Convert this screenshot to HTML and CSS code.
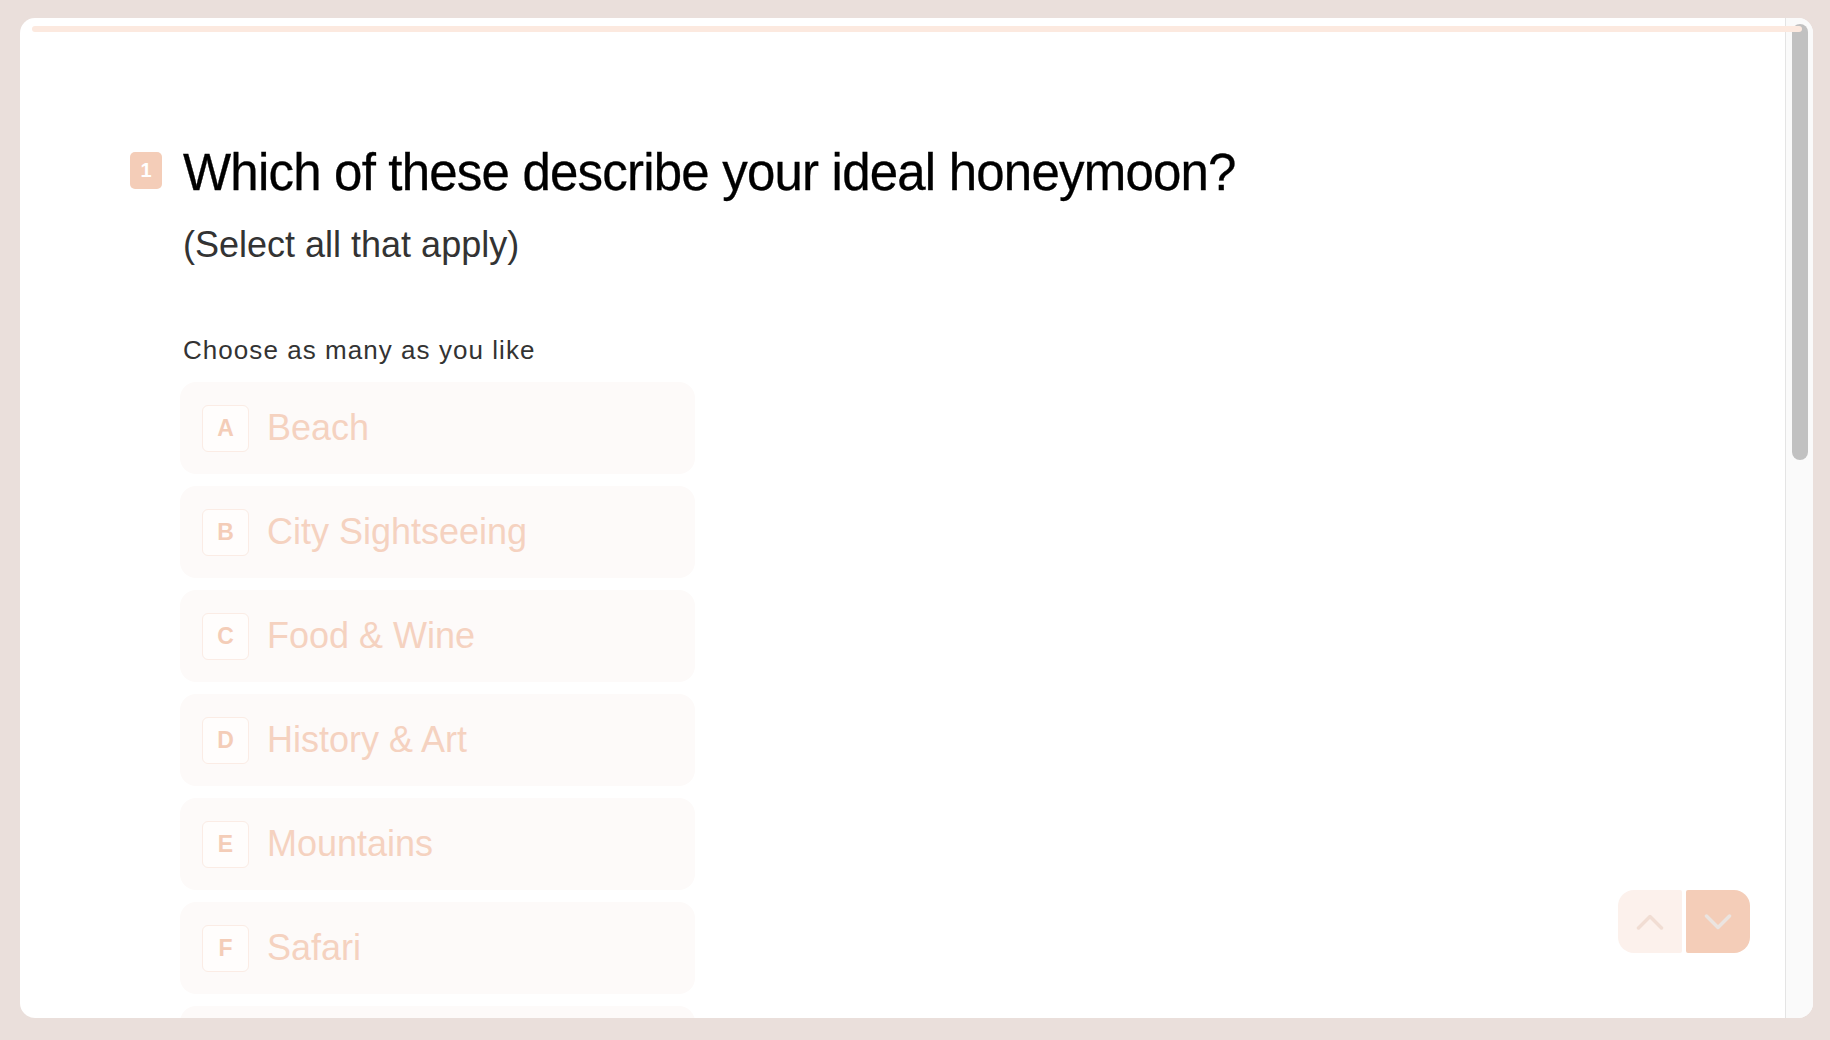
FILE: index.html
```html
<!DOCTYPE html>
<html lang="en">
<head>
<meta charset="utf-8">
<title>Honeymoon quiz</title>
<link rel="stylesheet" href="styles.css">
</head>
<body>
<div class="frame">
  <div class="progress"></div>
  <main class="content">
    <section class="question">
      <div class="badge">1</div>
      <div class="qbody">
        <h1 class="title">Which of these describe your ideal honeymoon?</h1>
        <p class="subtitle">(Select all that apply)</p>
        <p class="hint">Choose as many as you like</p>
        <ul class="options">
          <li class="option"><span class="key">A</span><span class="label">Beach</span></li>
          <li class="option"><span class="key">B</span><span class="label">City Sightseeing</span></li>
          <li class="option"><span class="key">C</span><span class="label">Food &amp; Wine</span></li>
          <li class="option"><span class="key">D</span><span class="label">History &amp; Art</span></li>
          <li class="option"><span class="key">E</span><span class="label">Mountains</span></li>
          <li class="option"><span class="key">F</span><span class="label">Safari</span></li>
          <li class="option" aria-hidden="true"></li>
        </ul>
      </div>
    </section>
    <nav class="nav">
      <button class="navbtn up" aria-label="Previous">
        <svg width="28" height="16" viewBox="0 0 28 16"><path d="M2.5 14 L14 2.5 L25.5 14" fill="none" stroke="#f1ddd3" stroke-width="3.5" stroke-linecap="round" stroke-linejoin="round"/></svg>
      </button>
      <button class="navbtn down" aria-label="Next">
        <svg width="28" height="16" viewBox="0 0 28 16"><path d="M2.5 2 L14 13.5 L25.5 2" fill="none" stroke="#ebe4e0" stroke-width="3.5" stroke-linecap="round" stroke-linejoin="round"/></svg>
      </button>
    </nav>
  </main>
  <div class="scrollbar"><div class="thumb"></div></div>
</div>
</body>
</html>
```

FILE: styles.css
```css
html, body {
  margin: 0;
  padding: 0;
}
body {
  background: #eadfdb;
  font-family: "Liberation Sans", Arial, sans-serif;
  height: 1040px;
  overflow: hidden;
}
.frame {
  position: relative;
  margin: 18px 17px 0 20px;
  height: 1000px;
  background: #ffffff;
  border-radius: 15px;
  overflow: hidden;
  display: flex;
}
.progress {
  position: absolute;
  left: 12px;
  top: 8px;
  width: 1770px;
  height: 6px;
  border-radius: 3px;
  background: #fce9df;
  z-index: 3;
}
.content {
  position: relative;
  flex: 1;
  padding: 124px 0 0 110px;
  overflow: hidden;
}
.question {
  display: flex;
  gap: 21px;
}
.badge {
  flex: none;
  width: 32px;
  height: 37px;
  margin-top: 10px;
  background: #f4cdb8;
  border-radius: 5px;
  color: #ffffff;
  font-weight: bold;
  font-size: 20px;
  line-height: 37px;
  text-align: center;
}
.qbody {
  flex: none;
  width: 1300px;
}
.title {
  margin: 0;
  font-size: 51px;
  line-height: 61px;
  font-weight: normal;
  letter-spacing: -0.8px;
  color: #000000;
  white-space: nowrap;
  -webkit-text-stroke: 0.3px #000000;
}
.subtitle {
  margin: 19.5px 0 0;
  font-size: 36px;
  line-height: 44px;
  color: #333333;
}
.hint {
  margin: 67.5px 0 0;
  font-size: 26px;
  line-height: 32px;
  letter-spacing: 1.05px;
  color: #333333;
}
.options {
  list-style: none;
  margin: 16px 0 0 -3px;
  padding: 0;
}
.option {
  box-sizing: border-box;
  width: 515px;
  height: 92px;
  margin-bottom: 12px;
  padding-left: 22px;
  display: flex;
  align-items: center;
  gap: 19px;
  background: #fdfaf9;
  border-radius: 16px;
}
.key {
  box-sizing: border-box;
  flex: none;
  width: 47px;
  height: 47px;
  border: 1.5px solid #fbece5;
  background: #fffdfc;
  border-radius: 6px;
  display: flex;
  align-items: center;
  justify-content: center;
  font-weight: bold;
  font-size: 23px;
  color: #f4cdb8;
}
.label {
  font-size: 36px;
  color: #f5d2c0;
  margin-left: -1px;
}
.nav {
  position: absolute;
  right: 35px;
  bottom: 65px;
  display: flex;
  gap: 4px;
}
.navbtn {
  width: 64px;
  height: 63px;
  border: none;
  padding: 0;
  display: flex;
  align-items: center;
  justify-content: center;
}
.navbtn.up {
  background: #fcf1ec;
  border-radius: 16px 2px 2px 16px;
}
.navbtn.down {
  background: #f4cdb8;
  border-radius: 2px 16px 16px 2px;
}
.scrollbar {
  flex: none;
  width: 27px;
  border-left: 1px solid #e4e4e4;
  background: #fafafa;
  padding-top: 6px;
}
.thumb {
  margin-left: 6px;
  width: 16px;
  height: 436px;
  border-radius: 8px;
  background: #c1c1c1;
}
```
